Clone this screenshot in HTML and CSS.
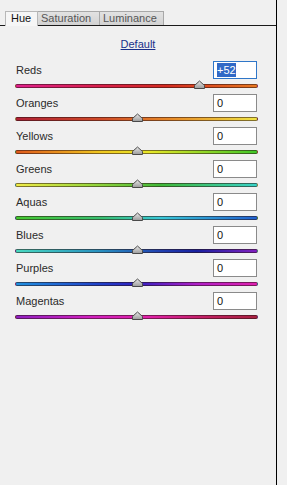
FILE: index.html
```html
<!DOCTYPE html>
<html lang="en">
<head>
    <meta charset="UTF-8">
    <meta name="viewport" content="width=device-width, initial-scale=1.0">
    <link rel="stylesheet" href="styles.css">
</head>
<body>
    <div class="panel">
        <div class="tabs">
            <div class="tab-gap"></div>
            <div class="tab tab-hue active">Hue</div>
            <div class="tab tab-sat">Saturation</div>
            <div class="tab tab-lum">Luminance</div>
        </div>
        <div class="default-row">
            <a class="default-link" href="#">Default</a>
        </div>
        <div class="sliders">
            <div class="slider-row">
                <div class="slider-head">
                    <span class="slider-label">Reds</span>
                    <div class="value-box focused"><span class="sel">+52</span></div>
                </div>
                <div class="track reds">
                    <svg class="thumb" style="left: 76%" width="13" height="10" viewBox="0 0 13 10"><defs><linearGradient id="tg1" x1="0" y1="0" x2="0" y2="1"><stop offset="0" stop-color="#e8e8e8"/><stop offset="1" stop-color="#9a9a9a"/></linearGradient></defs><path d="M1.5 8.5 L1.5 5.5 L6.5 1 L11.5 5.5 L11.5 8.5 Z" fill="url(#tg1)" stroke="#4a4a4a" stroke-width="1"/></svg>
                </div>
            </div>
            <div class="slider-row">
                <div class="slider-head">
                    <span class="slider-label">Oranges</span>
                    <div class="value-box">0</div>
                </div>
                <div class="track oranges">
                    <svg class="thumb" style="left: 50%" width="13" height="10" viewBox="0 0 13 10"><path d="M1.5 8.5 L1.5 5.5 L6.5 1 L11.5 5.5 L11.5 8.5 Z" fill="url(#tg1)" stroke="#4a4a4a" stroke-width="1"/></svg>
                </div>
            </div>
            <div class="slider-row">
                <div class="slider-head">
                    <span class="slider-label">Yellows</span>
                    <div class="value-box">0</div>
                </div>
                <div class="track yellows">
                    <svg class="thumb" style="left: 50%" width="13" height="10" viewBox="0 0 13 10"><path d="M1.5 8.5 L1.5 5.5 L6.5 1 L11.5 5.5 L11.5 8.5 Z" fill="url(#tg1)" stroke="#4a4a4a" stroke-width="1"/></svg>
                </div>
            </div>
            <div class="slider-row">
                <div class="slider-head">
                    <span class="slider-label">Greens</span>
                    <div class="value-box">0</div>
                </div>
                <div class="track greens">
                    <svg class="thumb" style="left: 50%" width="13" height="10" viewBox="0 0 13 10"><path d="M1.5 8.5 L1.5 5.5 L6.5 1 L11.5 5.5 L11.5 8.5 Z" fill="url(#tg1)" stroke="#4a4a4a" stroke-width="1"/></svg>
                </div>
            </div>
            <div class="slider-row">
                <div class="slider-head">
                    <span class="slider-label">Aquas</span>
                    <div class="value-box">0</div>
                </div>
                <div class="track aquas">
                    <svg class="thumb" style="left: 50%" width="13" height="10" viewBox="0 0 13 10"><path d="M1.5 8.5 L1.5 5.5 L6.5 1 L11.5 5.5 L11.5 8.5 Z" fill="url(#tg1)" stroke="#4a4a4a" stroke-width="1"/></svg>
                </div>
            </div>
            <div class="slider-row">
                <div class="slider-head">
                    <span class="slider-label">Blues</span>
                    <div class="value-box">0</div>
                </div>
                <div class="track blues">
                    <svg class="thumb" style="left: 50%" width="13" height="10" viewBox="0 0 13 10"><path d="M1.5 8.5 L1.5 5.5 L6.5 1 L11.5 5.5 L11.5 8.5 Z" fill="url(#tg1)" stroke="#4a4a4a" stroke-width="1"/></svg>
                </div>
            </div>
            <div class="slider-row">
                <div class="slider-head">
                    <span class="slider-label">Purples</span>
                    <div class="value-box">0</div>
                </div>
                <div class="track purples">
                    <svg class="thumb" style="left: 50%" width="13" height="10" viewBox="0 0 13 10"><path d="M1.5 8.5 L1.5 5.5 L6.5 1 L11.5 5.5 L11.5 8.5 Z" fill="url(#tg1)" stroke="#4a4a4a" stroke-width="1"/></svg>
                </div>
            </div>
            <div class="slider-row">
                <div class="slider-head">
                    <span class="slider-label">Magentas</span>
                    <div class="value-box">0</div>
                </div>
                <div class="track magentas">
                    <svg class="thumb" style="left: 50%" width="13" height="10" viewBox="0 0 13 10"><path d="M1.5 8.5 L1.5 5.5 L6.5 1 L11.5 5.5 L11.5 8.5 Z" fill="url(#tg1)" stroke="#4a4a4a" stroke-width="1"/></svg>
                </div>
            </div>
        </div>
    </div>
</body>
</html>
```

FILE: styles.css
```css
html, body {
    margin: 0;
    padding: 0;
    background-color: #f0f0f0;
}

body {
    font-family: 'Liberation Sans', Arial, sans-serif;
    font-size: 11px;
    color: #222;
}

.panel {
    width: 277px;
    height: 485px;
    border-right: 1px solid #000;
    box-sizing: border-box;
}

/* tabs */
.tabs {
    display: flex;
    align-items: flex-end;
    padding-top: 12px;
    height: 26px;
    box-sizing: border-box;
    border-bottom: 1px solid #1a1a1a;
}

.tab-gap {
    width: 5px;
}

.tab {
    height: 13px;
    line-height: 13px;
    box-sizing: content-box;
    background: linear-gradient(#e2e2e2, #d2d2d2);
    border: 1px solid #a8a8a8;
    border-bottom: none;
    border-left: none;
    color: #555;
    padding-left: 3px;
}

.tab-hue {
    width: 26px;
    padding-left: 5px;
    border-left: 1px solid #b8b8b8;
}

.tab-sat {
    width: 58px;
}

.tab-lum {
    width: 60px;
}

.tab.active {
    background-color: #f6f6f6;
    background-image: none;
    color: #111;
    height: 14px;
    margin-bottom: -1px;
    border-color: #b8b8b8;
}

/* default link */
.default-row {
    display: flex;
    justify-content: center;
    padding-top: 12px;
    height: 35px;
    box-sizing: border-box;
}

.default-link {
    color: #1a2f8a;
    text-decoration: underline;
    line-height: 13px;
}

/* sliders */
.sliders {
    padding: 0 18px 0 15px;
}

.slider-row {
    height: 33px;
    box-sizing: border-box;
}

.slider-head {
    display: flex;
    justify-content: space-between;
    align-items: center;
    height: 18px;
}

.slider-label {
    padding-left: 1px;
    color: #2a2a2a;
}

.value-box {
    width: 44px;
    height: 18px;
    box-sizing: border-box;
    border: 1px solid #8a8a8a;
    background-color: #fff;
    padding-left: 3px;
    line-height: 16px;
    color: #111;
    margin-right: 1px;
}

.value-box.focused {
    border-color: #2f76c8;
}

.sel {
    background-color: #3169c6;
    color: #fff;
    padding: 1px 0;
}

.track {
    position: relative;
    height: 4px;
    margin-top: 5px;
    border-radius: 2px;
    box-sizing: border-box;
    border: 1px solid rgba(40, 20, 20, 0.55);
}

.thumb {
    position: absolute;
    top: -5px;
    margin-left: -6px;
}

.reds { background: linear-gradient(to right, #e0208c, #d81e4a 35%, #d42a20 62%, #e87820); }
.oranges { background: linear-gradient(to right, #b02034, #d04a28 35%, #e88c28 65%, #f0e444); }
.yellows { background: linear-gradient(to right, #e05a1c, #f0c820 35%, #e8e828 55%, #40c828); }
.greens { background: linear-gradient(to right, #f0ec48, #9cd83c 30%, #40b838 60%, #38d4c8); }
.aquas { background: linear-gradient(to right, #44c830, #38c070 35%, #38c8d8 60%, #2060d0); }
.blues { background: linear-gradient(to right, #48d8c0, #2890c0 35%, #2040b0 60%, #1820a0 75%, #8020c0); }
.purples { background: linear-gradient(to right, #2090e0, #2040c8 35%, #3020c0 50%, #b020c8 75%, #e020b0); }
.magentas { background: linear-gradient(to right, #9020c0, #d020c0 30%, #e020a8 55%, #c02060 80%, #a82040); }
```
